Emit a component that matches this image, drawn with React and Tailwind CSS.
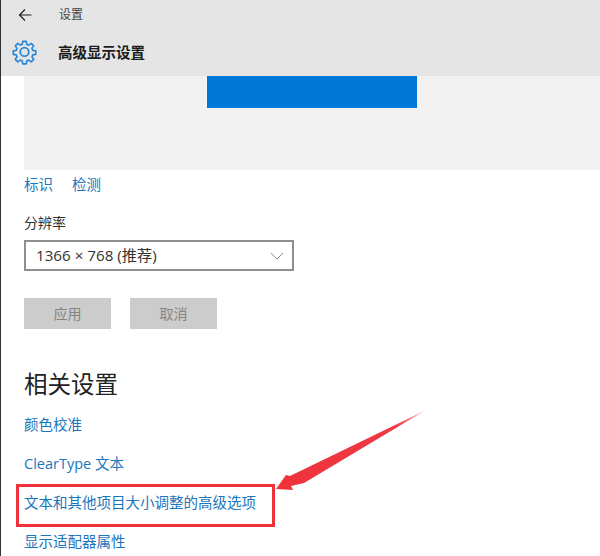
import React from 'react';

const FONT = "font-['Open_Sans','Noto_Sans_CJK_SC',sans-serif]";

const GearIcon = () => (
  <svg width="27" height="27" viewBox="0 0 24 24" fill="none" stroke="#2b88d8" strokeWidth="1.6" strokeLinejoin="round">
    <path d="M10.3 2h3.4l.5 2.9 1.9.8 2.4-1.7 2.4 2.4-1.7 2.4.8 1.9 2.9.5v3.4l-2.9.5-.8 1.9 1.7 2.4-2.4 2.4-2.4-1.7-1.9.8-.5 2.9h-3.4l-.5-2.9-1.9-.8-2.4 1.7-2.4-2.4 1.7-2.4-.8-1.9-2.9-.5v-3.4l2.9-.5.8-1.9-1.7-2.4 2.4-2.4 2.4 1.7 1.9-.8z" transform="translate(12 12) scale(.92) translate(-12 -12.8)" />
    <circle cx="12" cy="11.5" r="3.8" />
  </svg>
);

const LinkRow = ({ children, className = '' }) => (
  <a className={`block text-[14.5px] leading-[20px] text-[#1a76bd] ${className}`}>{children}</a>
);

export default function App() {
  return (
    <div className={`relative h-[556px] w-[600px] overflow-hidden border-l border-[#333333] bg-white ${FONT}`}>
      {/* Header */}
      <div className="h-[76px] bg-[#e5e5e5]">
        <div className="flex h-[29px] items-center">
          <svg className="ml-[17px]" width="14" height="14" viewBox="0 0 14 14" fill="none" stroke="#222222" strokeWidth="1.2">
            <path d="M1.5 7h12M7 1.5 1.5 7 7 12.5" />
          </svg>
          <span className="ml-[27px] text-[12px] text-[#444444]">设置</span>
        </div>
        <div className="flex h-[47px] items-center">
          <div className="ml-[10px]"><GearIcon /></div>
          <span className="ml-[20px] text-[14.5px] font-bold text-[#1c1c1c]">高级显示设置</span>
        </div>
      </div>

      {/* Content */}
      <div className="pl-[23px]">
        <div className="flex h-[94px] justify-start bg-[#f2f2f2] pl-[183px]">
          <div className="h-[32px] w-[210px] bg-[#0078d7]" />
        </div>

        <div className="mt-[5px] flex gap-[19px]">
          <LinkRow className="h-[20px] w-[29px]">标识</LinkRow>
          <LinkRow>检测</LinkRow>
        </div>

        <div className="mt-[18px] text-[14px] leading-[20px] text-[#333333]">分辨率</div>

        <div className="mt-[7px] flex h-[31px] w-[270px] items-center justify-between border-2 border-[#8f8f8f] pl-[10px] pr-[8px] text-[15.2px] text-[#333333]">
          <span>1366 × 768 (推荐)</span>
          <svg width="14" height="8" viewBox="0 0 14 8" fill="none" stroke="#8a8a8a" strokeWidth="1">
            <path d="M1 1l6 6 6-6" />
          </svg>
        </div>

        <div className="mt-[27px] flex gap-[19px]">
          <button className="h-[31px] w-[87px] bg-[#cccccc] text-[14px] text-[#858585]">应用</button>
          <button className="h-[31px] w-[87px] bg-[#cccccc] text-[14px] text-[#858585]">取消</button>
        </div>

        <h2 className="mt-[39px] text-[23.5px] leading-[32px] text-[#222222]">相关设置</h2>

        <LinkRow className="mt-[15px]">颜色校准</LinkRow>
        <LinkRow className="mt-[19px]">ClearType 文本</LinkRow>
        <LinkRow className="mt-[19px]">文本和其他项目大小调整的高级选项</LinkRow>
        <LinkRow className="mt-[19px]">显示适配器属性</LinkRow>
      </div>

      {/* Red annotation */}
      <div className="absolute left-[15px] top-[484px] h-[43px] w-[259px] border-[3px] border-[#f0323a]" />
      <svg className="absolute left-[273px] top-[408px]" width="156" height="86" viewBox="0 0 156 86">
        <defs>
          <linearGradient id="arrowFill" x1="0" y1="1" x2="1" y2="0">
            <stop offset="0" stopColor="#f0323a" />
            <stop offset="0.8" stopColor="#ee3a44" />
            <stop offset="1" stopColor="#f3c4c6" />
          </linearGradient>
        </defs>
        <path d="M152 2 L16 68 L12 67 L2 81 L19 82 L17 78 L30 75 Z" fill="url(#arrowFill)" />
      </svg>
    </div>
  );
}
